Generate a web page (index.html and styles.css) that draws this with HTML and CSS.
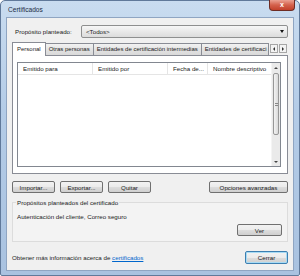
FILE: index.html
```html
<!DOCTYPE html>
<html lang="es">
<head>
    <meta charset="UTF-8">
    <title>Certificados</title>
    <link rel="stylesheet" href="styles.css">
</head>
<body>
    <div class="window">
        <!-- Title bar -->
        <div class="titlebar">
            <span class="title">Certificados</span>
            <div class="close">x</div>
        </div>

        <div class="client">
            <div class="purpose">
                <span class="label">Propósito planteado:</span>
                <div class="combo"><span>&lt;Todos&gt;</span><span class="drop"></span></div>
            </div>

            <!-- Tabs -->
            <div class="tabs">
                <div class="tab active">Personal</div>
                <div class="tab">Otras personas</div>
                <div class="tab">Entidades de certificación intermedias</div>
                <div class="tab clipped">Entidades de certificaci</div>
                <div class="tab-scroll">
                    <span class="ts-btn"><i class="tri left"></i></span>
                    <span class="ts-btn"><i class="tri right"></i></span>
                </div>
            </div>
            <div class="panel">
                <div class="list">
                    <div class="list-body">
                        <div class="header">
                            <div class="col c1">Emitido para</div>
                            <div class="col c2">Emitido por</div>
                            <div class="col c3">Fecha de...</div>
                            <div class="col c4">Nombre descriptivo</div>
                        </div>
                    </div>
                    <div class="scrollbar">
                        <div class="sb-btn"><i class="tri up"></i></div>
                        <div class="sb-track"><div class="sb-thumb"><span class="grip"></span></div></div>
                        <div class="sb-btn"><i class="tri down"></i></div>
                    </div>
                </div>
            </div>

            <div class="actions">
                <button class="btn w43">Importar...</button>
                <button class="btn w43">Exportar...</button>
                <button class="btn w43">Quitar</button>
                <button class="btn adv">Opciones avanzadas</button>
            </div>

            <!-- Purposes group -->
            <div class="group">
                <span class="legend">Propósitos planteados del certificado</span>
                <p class="purposes">Autenticación del cliente, Correo seguro</p>
                <div class="group-foot"><button class="btn w45">Ver</button></div>
            </div>

            <div class="footer">
                <span>Obtener más información acerca de <a href="#">certificados</a></span>
                <button class="btn default">Cerrar</button>
            </div>
        </div>
    </div>
</body>
</html>
```

FILE: styles.css
```css
/* Windows 7 style dialog */
* { margin: 0; padding: 0; box-sizing: border-box; }
body { width: 300px; height: 276px; overflow: hidden; background: #fff; font-family: "Liberation Sans", Arial, sans-serif; font-size: 6.2px; color: #222; }

.window {
    width: 300px; height: 276px; display: flex; flex-direction: column;
    padding: 0 5px 4px 5px; border: 1px solid #60799a; border-radius: 5px 5px 2px 2px;
    background: linear-gradient(#c9dcf0, #b4cce7 40%, #a9c2e0);
}
.titlebar { height: 16px; display: flex; justify-content: space-between; align-items: flex-start; }
.title { font-size: 6.6px; color: #1c2c44; margin: 5px 0 0 2px; }
.close {
    width: 26px; height: 11px; margin: -1px -1px 0 0; border: 1px solid #6e2c24; border-top: none;
    border-radius: 0 0 4px 4px; background: linear-gradient(#eba192, #d4614c 50%, #c2412b);
    color: #fff; font-weight: bold; font-size: 7px; text-align: center; line-height: 9px;
}
.client { flex: 1; background: #f0f0f0; border: 1px solid #8fa5c2; padding: 0 5px; display: flex; flex-direction: column; }

.tri { display: block; width: 0; height: 0; border: 2px solid transparent; }
.tri.left { border-right: 2px solid #333; border-left: none; }
.tri.right { border-left: 2px solid #333; border-right: none; }
.tri.up { border-bottom: 2px solid #444; border-top: none; }
.tri.down { border-top: 2px solid #444; border-bottom: none; }

.purpose { display: flex; align-items: center; margin-top: 7px; padding-left: 3px; }
.label { width: 66px; }
.combo {
    flex: 1; height: 13px; display: flex; justify-content: space-between; align-items: center;
    padding: 0 3px 0 4px; border: 1px solid #8e8f8f; border-radius: 2px;
    background: linear-gradient(#f7f7f7, #e9e9e9 50%, #dcdcdc);
}
.drop { width: 0; height: 0; border: 2.5px solid transparent; border-top: 3px solid #111; border-bottom: none; }

.tabs { display: flex; margin-top: 4px; height: 13px; align-items: flex-end; position: relative; z-index: 1; font-size: 6px; }
.tab {
    height: 12px; padding: 0 3px; line-height: 11px; white-space: nowrap; border: 1px solid #898c95;
    border-bottom: none; margin-right: -1px; background: linear-gradient(#f2f2f2, #e3e3e3 50%, #d9d9d9);
}
.tab.active { height: 14px; margin-bottom: -1px; background: #fff; line-height: 13px; padding: 0 4px; }
.tab.clipped { flex: 1 1 auto; min-width: 0; overflow: hidden; }
.tab-scroll { display: flex; gap: 1px; margin: 0 1px 2px 2px; }
.ts-btn {
    width: 8px; height: 9px; border: 1px solid #a6a6a6; background: #f3f3f3;
    display: flex; align-items: center; justify-content: center;
}

.panel { height: 119px; border: 1px solid #898c95; background: #fff; padding: 6px 6px 6px 4px; }
.list { height: 100%; border: 1px solid #828790; display: flex; background: #fff; }
.list-body { flex: 1; }
.header { display: flex; height: 12px; border-bottom: 1px solid #e5e5e5; }
.col { padding-left: 5px; line-height: 12px; border-right: 1px solid #e5e5e5; white-space: nowrap; overflow: hidden; }
.c1 { width: 75px; }
.c2 { width: 75px; }
.c3 { width: 40px; }
.c4 { flex: 1; border-right: none; }

.scrollbar { width: 9px; display: flex; flex-direction: column; background: #eaeaea; border-left: 1px solid #f4f4f4; }
.sb-btn { height: 9px; display: flex; align-items: center; justify-content: center; }
.sb-track { flex: 1; padding: 1px 0; }
.sb-thumb {
    height: 62px; margin: 0 1px; border: 1px solid #979797; border-radius: 2px;
    background: linear-gradient(90deg, #f3f3f3, #dadada); display: flex; align-items: center; justify-content: center;
}
.grip { width: 3px; height: 3px; border-top: 1px solid #888; border-bottom: 1px solid #888; }

.btn {
    height: 12px; font-family: inherit; font-size: 6.2px; color: #222; border: 1px solid #707070; border-radius: 2px;
    background: linear-gradient(#f2f2f2, #ebebeb 50%, #dddddd 51%, #cfcfcf);
}
.actions { display: flex; gap: 5px; margin-top: 7px; }
.w43 { width: 43px; }
.w45 { width: 45px; }
.adv { width: 79px; margin-left: auto; }

.group {
    margin-top: 9px; height: 40px; position: relative; padding: 0 5px 0 4px;
    border: 1px solid #dcdcdc; background: #f3f3f3;
}
.legend { position: absolute; top: -4px; left: 3px; background: #f0f0f0; padding: 0 1px; }
.purposes { margin-top: 10px; }
.group-foot { display: flex; justify-content: flex-end; margin-top: 4px; }

.footer { display: flex; justify-content: space-between; align-items: center; margin-top: 9px; }
.footer a { color: #0066cc; }
.default { width: 43px; height: 13px; border-color: #3c7fb1; box-shadow: inset 0 0 0 1px #a8dbf4; }
```
